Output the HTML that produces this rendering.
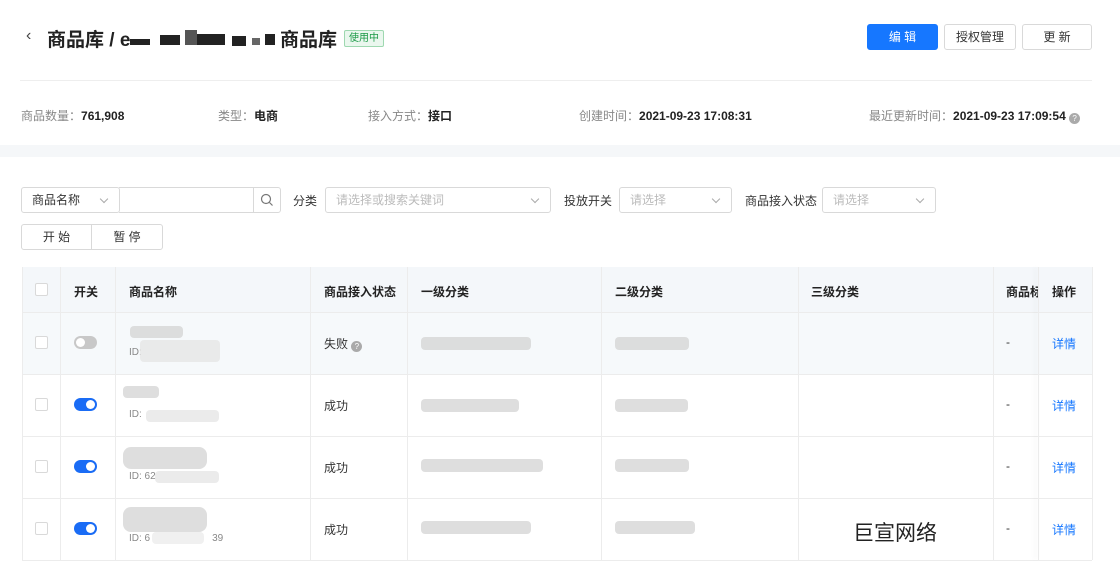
<!DOCTYPE html>
<html><head><meta charset="utf-8"><style>
*{box-sizing:border-box;margin:0;padding:0}
body{width:1120px;height:561px;overflow:hidden;background:#fff;font-family:"Liberation Sans","Noto Sans CJK SC",sans-serif;color:#333;position:relative;font-size:12px}
.a{position:absolute;white-space:nowrap}
.lbl{color:#888}
.b{font-weight:bold;color:#222}
.btn{position:absolute;height:26px;border:1px solid #d9d9d9;border-radius:3px;background:#fff;font-size:12px;text-align:center;line-height:24px;color:#333}
.sel{position:absolute;height:26px;border:1px solid #d9d9d9;border-radius:3px;background:#fff;color:#bbb;font-size:12px;line-height:24px;padding-left:10px}
.sel:after{content:"";position:absolute;right:12px;top:8px;width:5px;height:5px;border-right:1px solid #aaa;border-bottom:1px solid #aaa;transform:rotate(45deg)}
.cb{position:absolute;width:13px;height:13px;border:1px solid #d9d9d9;border-radius:2px;background:#fff}
.tg{position:absolute;width:23px;height:13px;border-radius:7px;background:#1a6cf5}
.tg:after{content:"";position:absolute;right:2px;top:2px;width:9px;height:9px;border-radius:50%;background:#fff}
.tg.off{background:#c8c8c8}
.tg.off:after{left:2px;right:auto}
.blur{position:absolute;background:#d6d6d6;border-radius:4px;opacity:.8}
.k{position:absolute;background:#222}
.vl{position:absolute;top:267px;height:293px;width:1px;background:#ececec}
.hl{position:absolute;left:22px;width:1070px;height:1px;background:#ececec}
.q{display:inline-block;width:11px;height:11px;border-radius:50%;background:#aaa;color:#fff;font-size:8px;line-height:11px;text-align:center;vertical-align:-1px}
</style></head><body>
<div class="a" style="left:26px;top:27px;font-size:16px;color:#444">‹</div>
<div class="a" style="left:47px;top:25px;font-size:19px;font-weight:bold;color:#222">商品库 / e</div>
<div class="k" style="left:130px;top:39px;width:20px;height:6px"></div>
<div class="k" style="left:160px;top:35px;width:20px;height:10px"></div>
<div class="k" style="left:185px;top:30px;width:12px;height:15px;background:#555"></div>
<div class="k" style="left:197px;top:34px;width:28px;height:11px"></div>
<div class="k" style="left:232px;top:36px;width:14px;height:10px"></div>
<div class="k" style="left:252px;top:38px;width:8px;height:7px;background:#666"></div>
<div class="k" style="left:265px;top:34px;width:10px;height:11px"></div>
<div class="a" style="left:280px;top:25px;font-size:19px;font-weight:bold;color:#222">商品库</div>
<div class="a" style="left:344px;top:30px;height:17px;padding:0 4px;border:1px solid #9ed8b0;background:#eaf7ee;color:#1a9a46;font-size:10px;line-height:15px;border-radius:2px">使用中</div>
<div class="btn" style="left:867px;top:24px;width:71px;background:#1677ff;border-color:#1677ff;color:#fff">编 辑</div>
<div class="btn" style="left:944px;top:24px;width:72px">授权管理</div>
<div class="btn" style="left:1022px;top:24px;width:70px">更 新</div>
<div class="a" style="left:20px;top:80px;width:1072px;height:1px;background:#eee"></div>
<div class="a" style="left:21px;top:107px"><span class="lbl">商品数量：</span><span class="b">761,908</span></div>
<div class="a" style="left:218px;top:107px"><span class="lbl">类型：</span><span class="b">电商</span></div>
<div class="a" style="left:368px;top:107px"><span class="lbl">接入方式：</span><span class="b">接口</span></div>
<div class="a" style="left:579px;top:107px"><span class="lbl">创建时间：</span><span class="b">2021-09-23 17:08:31</span></div>
<div class="a" style="left:869px;top:107px"><span class="lbl">最近更新时间：</span><span class="b">2021-09-23 17:09:54</span> <span class="q">?</span></div>
<div class="a" style="left:0;top:145px;width:1120px;height:12px;background:#f5f7f9"></div>
<div class="sel" style="left:21px;top:187px;width:99px;color:#333">商品名称</div>
<div class="a" style="left:119px;top:187px;width:135px;height:26px;border:1px solid #d9d9d9;border-left:none"></div>
<div class="a" style="left:253px;top:187px;width:28px;height:26px;border:1px solid #d9d9d9;border-radius:0 3px 3px 0"><svg width="26" height="24"><circle cx="12" cy="11" r="4.5" fill="none" stroke="#777" stroke-width="1.2"/><path d="M15.5 14.5l3 3" stroke="#777" stroke-width="1.2"/></svg></div>
<div class="a" style="left:293px;top:192px">分类</div>
<div class="sel" style="left:325px;top:187px;width:226px">请选择或搜索关键词</div>
<div class="a" style="left:564px;top:192px">投放开关</div>
<div class="sel" style="left:619px;top:187px;width:113px">请选择</div>
<div class="a" style="left:745px;top:192px">商品接入状态</div>
<div class="sel" style="left:822px;top:187px;width:114px">请选择</div>
<div class="btn" style="left:21px;top:224px;width:71px;border-radius:3px 0 0 3px">开 始</div>
<div class="btn" style="left:91px;top:224px;width:72px;border-radius:0 3px 3px 0">暂 停</div>
<div class="a" style="left:22px;top:267px;width:1070px;height:45px;background:#f4f7fa"></div>
<div class="a" style="left:22px;top:312px;width:1070px;height:62px;background:#f6f9fb"></div>
<div class="hl" style="top:312px"></div><div class="hl" style="top:374px"></div><div class="hl" style="top:436px"></div><div class="hl" style="top:498px"></div><div class="hl" style="top:560px"></div>
<div class="vl" style="left:22px"></div><div class="vl" style="left:60px"></div><div class="vl" style="left:115px"></div><div class="vl" style="left:310px"></div><div class="vl" style="left:407px"></div><div class="vl" style="left:601px"></div><div class="vl" style="left:798px"></div><div class="vl" style="left:993px"></div><div class="vl" style="left:1038px;box-shadow:-3px 0 5px rgba(0,0,0,.08)"></div><div class="vl" style="left:1092px"></div>
<div class="cb" style="left:35px;top:283px"></div>
<div class="a b" style="left:74px;top:283px">开关</div>
<div class="a b" style="left:129px;top:283px">商品名称</div>
<div class="a b" style="left:324px;top:283px">商品接入状态</div>
<div class="a b" style="left:421px;top:283px">一级分类</div>
<div class="a b" style="left:615px;top:283px">二级分类</div>
<div class="a b" style="left:811px;top:283px">三级分类</div>
<div class="a b" style="left:1006px;top:283px;width:32px;overflow:hidden">商品标</div>
<div class="a b" style="left:1052px;top:283px">操作</div>

<div class="cb" style="left:35px;top:336px"></div><div class="tg off" style="left:74px;top:336px"></div>
<div class="blur" style="left:130px;top:326px;width:53px;height:12px"></div><div class="a lbl" style="left:129px;top:347px;font-size:10px">ID: </div><div class="blur" style="left:140px;top:340px;width:80px;height:22px;background:#e6e6e6"></div>
<div class="a" style="left:324px;top:335px">失败 <span class="q">?</span></div>
<div class="blur" style="left:421px;top:337px;width:110px;height:13px"></div><div class="blur" style="left:615px;top:337px;width:74px;height:13px"></div>
<div class="a" style="left:1006px;top:335px">-</div><div class="a" style="left:1052px;top:335px;color:#1677ff">详情</div>

<div class="cb" style="left:35px;top:398px"></div><div class="tg" style="left:74px;top:398px"></div>
<div class="blur" style="left:123px;top:386px;width:36px;height:12px"></div><div class="a lbl" style="left:129px;top:409px;font-size:10px">ID: </div><div class="blur" style="left:146px;top:410px;width:73px;height:12px;background:#e6e6e6"></div>
<div class="a" style="left:324px;top:397px">成功</div>
<div class="blur" style="left:421px;top:399px;width:98px;height:13px"></div><div class="blur" style="left:615px;top:399px;width:73px;height:13px"></div>
<div class="a" style="left:1006px;top:397px">-</div><div class="a" style="left:1052px;top:397px;color:#1677ff">详情</div>

<div class="cb" style="left:35px;top:460px"></div><div class="tg" style="left:74px;top:460px"></div>
<div class="blur" style="left:123px;top:447px;width:84px;height:22px;border-radius:8px"></div><div class="a lbl" style="left:129px;top:471px;font-size:10px">ID: 62</div><div class="blur" style="left:155px;top:471px;width:64px;height:12px;background:#e6e6e6"></div>
<div class="a" style="left:324px;top:459px">成功</div>
<div class="blur" style="left:421px;top:459px;width:122px;height:13px"></div><div class="blur" style="left:615px;top:459px;width:74px;height:13px"></div>
<div class="a" style="left:1006px;top:459px">-</div><div class="a" style="left:1052px;top:459px;color:#1677ff">详情</div>

<div class="cb" style="left:35px;top:522px"></div><div class="tg" style="left:74px;top:522px"></div>
<div class="blur" style="left:123px;top:507px;width:84px;height:25px;border-radius:8px"></div><div class="a lbl" style="left:129px;top:533px;font-size:10px">ID: 6<span style="margin-left:62px">39</span></div><div class="blur" style="left:152px;top:532px;width:52px;height:12px;background:#ececec"></div>
<div class="a" style="left:324px;top:521px">成功</div>
<div class="blur" style="left:421px;top:521px;width:110px;height:13px"></div><div class="blur" style="left:615px;top:521px;width:80px;height:13px"></div>
<div class="a" style="left:853px;top:517px;font-size:21px;color:#222">巨宣网络</div>
<div class="a" style="left:1006px;top:521px">-</div><div class="a" style="left:1052px;top:521px;color:#1677ff">详情</div>
</body></html>
